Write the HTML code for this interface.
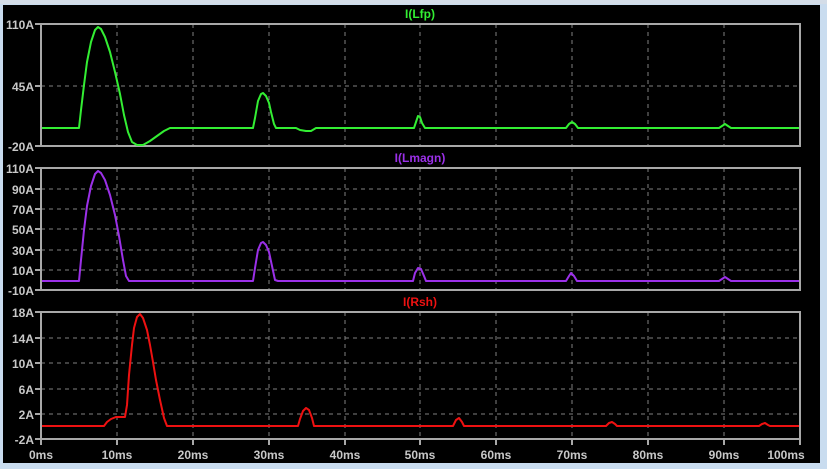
<!DOCTYPE html>
<html><head><style>
body{margin:0;width:827px;height:469px;overflow:hidden;background:#c9dcef;}
svg{display:block}
text{font-family:"Liberation Sans",sans-serif;font-weight:bold;font-size:12px}
</style></head><body>
<svg width="827" height="469" viewBox="0 0 827 469">
<rect x="0" y="0" width="827" height="469" fill="#c9dcef"/>
<rect x="0" y="0" width="827" height="4" fill="#d4dde8"/>
<rect x="3" y="5" width="817" height="458" fill="#000"/>
<g stroke="#808080" stroke-width="1" stroke-dasharray="4,4" fill="none">
<path d="M117 24V146M193 24V146M269 24V146M345 24V146M420 24V146M496 24V146M572 24V146M648 24V146M724 24V146"/>
<path d="M41 86H800"/>
<path d="M117 168V290M193 168V290M269 168V290M345 168V290M420 168V290M496 168V290M572 168V290M648 168V290M724 168V290"/>
<path d="M41 189H800M41 209H800M41 229H800M41 250H800M41 270H800"/>
<path d="M117 312V439M193 312V439M269 312V439M345 312V439M420 312V439M496 312V439M572 312V439M648 312V439M724 312V439"/>
<path d="M41 338H800M41 363H800M41 389H800M41 414H800"/>
</g>
<g stroke="#a8a8a8" stroke-width="2" fill="none">
<rect x="41" y="24" width="759" height="122"/>
<rect x="41" y="168" width="759" height="122"/>
<rect x="41" y="312" width="759" height="127"/>
<path d="M35 24H41M35 86H41M35 146H41M35 168H41M35 189H41M35 209H41M35 229H41M35 250H41M35 270H41M35 290H41M35 312H41M35 338H41M35 363H41M35 389H41M35 414H41M35 439H41"/>
<path d="M41 439V445M117 439V445M193 439V445M269 439V445M345 439V445M420 439V445M496 439V445M572 439V445M648 439V445M724 439V445M800 439V445"/>
</g>
<g fill="#c8c8c8" text-anchor="end">
<text x="34" y="29">110A</text><text x="34" y="91">45A</text><text x="34" y="151">-20A</text>
<text x="34" y="173">110A</text><text x="34" y="194">90A</text><text x="34" y="214">70A</text><text x="34" y="234">50A</text><text x="34" y="255">30A</text><text x="34" y="275">10A</text><text x="34" y="295">-10A</text>
<text x="34" y="317">18A</text><text x="34" y="343">14A</text><text x="34" y="368">10A</text><text x="34" y="394">6A</text><text x="34" y="419">2A</text><text x="34" y="444">-2A</text>
</g>
<g fill="#c8c8c8" text-anchor="middle">
<text x="41" y="459">0ms</text><text x="117" y="459">10ms</text><text x="193" y="459">20ms</text><text x="269" y="459">30ms</text><text x="345" y="459">40ms</text><text x="420" y="459">50ms</text><text x="496" y="459">60ms</text><text x="572" y="459">70ms</text><text x="648" y="459">80ms</text><text x="724" y="459">90ms</text><text x="786" y="459">100ms</text>
</g>
<text x="420" y="18" fill="#33ee33" text-anchor="middle">I(Lfp)</text>
<text x="420" y="162" fill="#9b30e8" text-anchor="middle">I(Lmagn)</text>
<text x="420" y="306" fill="#ee1111" text-anchor="middle">I(Rsh)</text>
<g fill="none" stroke-width="2" stroke-linejoin="round">
<polyline stroke="#33ee33" points="42,128 79,128 81,110 84,85 87,62 91,42 95,30 98,27 101,29 105,37 110,52 115,72 120,94 124,115 128,132 132,142 137,145 143,145 150,141 157,136 164,131 170,128 253,128 255,118 258,101 261,94 263,93 266,96 269,103 271,112 274,124 276,128 296,128 300,130 306,131 311,131 316,128 414,128 416,122 418,116 420,117 422,123 425,128 566,128 569,124 572,122 575,124 578,128 719,128 722,126 725,124 728,126 731,128 799,128"/>
<polyline stroke="#9b30e8" points="42,281 79,281 81,260 84,230 87,206 91,186 95,174 98,171 101,173 105,180 110,195 115,215 119,236 123,260 126,276 129,281 253,281 255,268 258,250 261,243 263,242 266,245 269,252 272,266 275,280 278,281 413,281 415,273 418,268 421,269 424,276 426,281 566,281 569,276 571,273 574,276 577,281 719,281 722,279 725,277 728,279 731,281 799,281"/>
<polyline stroke="#ee1111" points="42,426 104,426 107,422 111,419 116,417 125,417 127,405 129,375 132,345 134,328 137,317 140,314 143,318 147,330 150,345 153,362 156,380 160,400 164,418 167,426 298,426 300,419 303,411 306,408 309,410 312,418 314,426 453,426 456,420 459,418 462,422 464,426 606,426 609,423 612,422 615,424 617,426 759,426 762,424 765,423 768,425 770,426 799,426"/>
</g>
</svg>
</body></html>
